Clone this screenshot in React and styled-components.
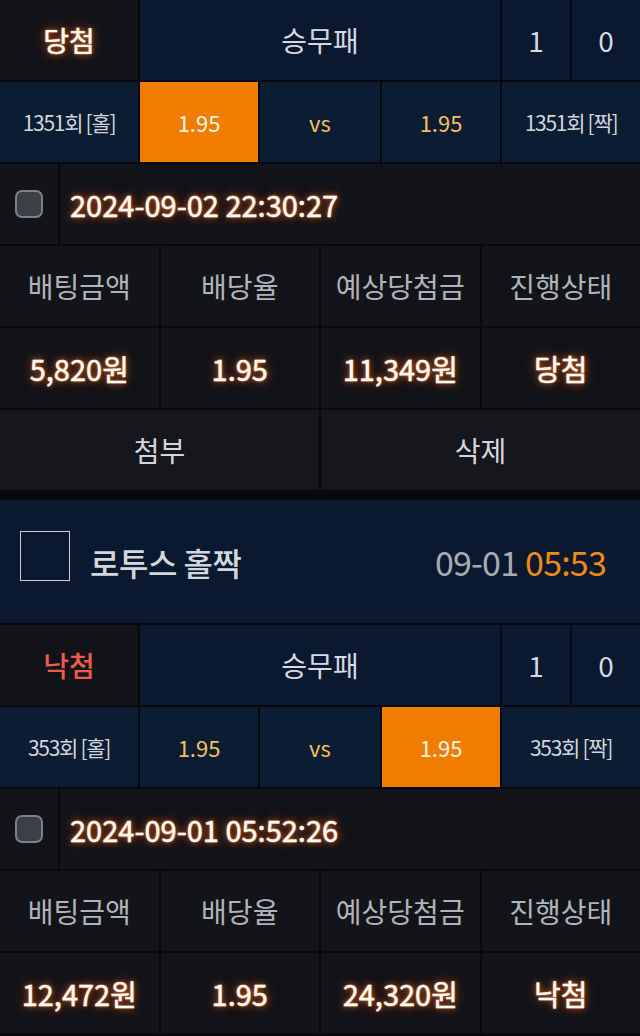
import styled, { createGlobalStyle, css } from "styled-components";

const GlobalStyle = createGlobalStyle`
  html, body {
    margin: 0;
    padding: 0;
    background: #08090c;
  }
  body {
    font-family: "Noto Sans CJK KR", "Noto Sans", sans-serif;
    -webkit-font-smoothing: antialiased;
  }
`;

const glow = css`
  color: #fffaf4;
  font-weight: 400;
  -webkit-text-stroke: 0.4px #fffaf4;
  text-shadow: 0 0 2px rgba(255, 160, 90, 0.8), 0 0 6px rgba(255, 110, 30, 0.8),
    0 0 14px rgba(255, 80, 0, 0.5);
`;

const bets = [
  {
    id: 1,
    showHeader: false,
    result: "당첨",
    win: true,
    round: "1351회",
    pick: "home",
    odds: "1.95",
    placedAt: "2024-09-02 22:30:27",
    amount: "5,820원",
    payout: "11,349원",
    showActions: true,
  },
  {
    id: 2,
    showHeader: true,
    title: "로투스 홀짝",
    date: "09-01",
    time: "05:53",
    result: "낙첨",
    win: false,
    round: "353회",
    pick: "away",
    odds: "1.95",
    placedAt: "2024-09-01 05:52:26",
    amount: "12,472원",
    payout: "24,320원",
    showActions: false,
  },
];

function BetCard({ bet }) {
  return (
    <Card>
      {bet.showHeader && (
        <Header>
          <TitleBox />
          <Title>{bet.title}</Title>
          <Time>
            {bet.date} <em>{bet.time}</em>
          </Time>
        </Header>
      )}

      <TypeRow>
        <ResultCell $win={bet.win}>{bet.result}</ResultCell>
        <NavyCell>승무패</NavyCell>
        <NavyCell>1</NavyCell>
        <NavyCell>0</NavyCell>
      </TypeRow>

      <OddsRow>
        <TeamCell>{bet.round} [홀]</TeamCell>
        <OddsCell $active={bet.pick === "home"}>{bet.odds}</OddsCell>
        <OddsCell>vs</OddsCell>
        <OddsCell $active={bet.pick === "away"}>{bet.odds}</OddsCell>
        <TeamCell>{bet.round} [짝]</TeamCell>
      </OddsRow>

      <DateRow>
        <CheckCell>
          <Check />
        </CheckCell>
        <DateCell>{bet.placedAt}</DateCell>
      </DateRow>

      <InfoGrid>
        <Label>배팅금액</Label>
        <Label>배당율</Label>
        <Label>예상당첨금</Label>
        <Label>진행상태</Label>
        <Value>{bet.amount}</Value>
        <Value>{bet.odds}</Value>
        <Value>{bet.payout}</Value>
        <Value>{bet.result}</Value>
      </InfoGrid>

      {bet.showActions && (
        <Actions>
          <ActionButton>첨부</ActionButton>
          <ActionButton>삭제</ActionButton>
        </Actions>
      )}
    </Card>
  );
}

export default function App() {
  return (
    <>
      <GlobalStyle />
      <List>
        {bets.map((bet) => (
          <BetCard key={bet.id} bet={bet} />
        ))}
      </List>
    </>
  );
}

const List = styled.div`
  display: flex;
  flex-direction: column;
  gap: 10px;
  width: 640px;
  background: #08090c;
`;

const Card = styled.div`
  display: flex;
  flex-direction: column;
  gap: 2px;
`;

const Header = styled.div`
  height: 123px;
  display: flex;
  align-items: center;
  padding: 0 34px 0 20px;
  background: #0a1830;
`;

const TitleBox = styled.div`
  width: 48px;
  height: 48px;
  border: 1px solid #c9cdd3;
  margin: 0 20px 12px 0;
`;

const Title = styled.div`
  flex: 1;
  font-size: 32px;
  font-weight: 500;
  color: #d3d7dc;
  letter-spacing: -0.5px;
`;

const Time = styled.div`
  font-size: 34px;
  color: #a7acb2;
  letter-spacing: -0.8px;

  em {
    font-style: normal;
    color: #f08a12;
  }
`;

const cell = css`
  display: flex;
  align-items: center;
  justify-content: center;
  height: 80px;
`;

const TypeRow = styled.div`
  display: grid;
  grid-template-columns: 138px 1fr 68px 68px;
  gap: 2px;
`;

const ResultCell = styled.div`
  ${cell};
  background: #121419;
  font-size: 28px;
  ${(p) =>
    p.$win
      ? glow
      : css`
          color: #ea5b4b;
          font-weight: 500;
        `}
`;

const NavyCell = styled.div`
  ${cell};
  background: #0a1830;
  font-size: 28px;
  color: #d6dae0;
`;

const OddsRow = styled.div`
  display: grid;
  grid-template-columns: 138px 118px 1fr 118px 138px;
  gap: 2px;
`;

const TeamCell = styled.div`
  ${cell};
  background: #0c1c33;
  font-size: 21px;
  color: #d2d6dc;
  letter-spacing: -1.3px;
`;

const OddsCell = styled.div`
  ${cell};
  font-size: 22px;
  background: ${(p) => (p.$active ? "#f07c00" : "#0c1c33")};
  color: ${(p) => (p.$active ? "#fff6ea" : "#f4c15c")};
`;

const DateRow = styled.div`
  display: grid;
  grid-template-columns: 58px 1fr;
  gap: 2px;
`;

const CheckCell = styled.div`
  ${cell};
  background: #121419;
`;

const Check = styled.div`
  width: 24px;
  height: 24px;
  border: 2px solid #7d8086;
  border-radius: 7px;
  background: #3c3f44;
`;

const DateCell = styled.div`
  ${cell};
  justify-content: flex-start;
  padding-left: 10px;
  background: #121419;
  font-size: 29px;
  ${glow};
`;

const InfoGrid = styled.div`
  display: grid;
  grid-template-columns: repeat(4, 1fr);
  gap: 2px;
`;

const Label = styled.div`
  ${cell};
  background: #121419;
  font-size: 28px;
  color: #b0b4ba;
`;

const Value = styled.div`
  ${cell};
  background: #121419;
  font-size: 29px;
  ${glow};
`;

const Actions = styled.div`
  display: grid;
  grid-template-columns: 1fr 1fr;
  gap: 2px;
`;

const ActionButton = styled.div`
  ${cell};
  background: #15171d;
  font-size: 28px;
  color: #d3d7dc;
  cursor: pointer;
`;
